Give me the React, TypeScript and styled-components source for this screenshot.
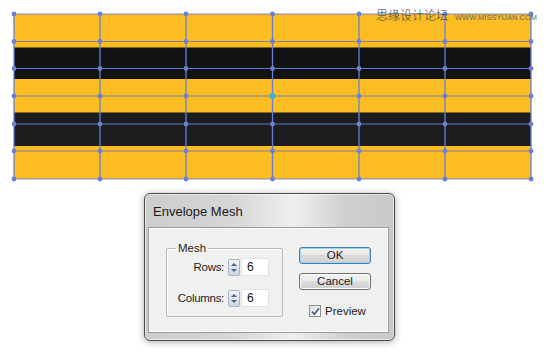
import React from "react";
import styled, { createGlobalStyle } from "styled-components";

const Global = createGlobalStyle`
  html, body { margin: 0; padding: 0; background: #ffffff; }
  body { width: 550px; height: 357px; overflow: hidden; font-family: "Liberation Sans", Arial, sans-serif; }
`;

const Page = styled.div`
  position: relative;
  width: 550px;
  height: 357px;
  background: #ffffff;
`;

const Artwork = styled.svg`
  display: block;
  width: 550px;
  height: 188px;
`;

const Watermark = styled.div`
  position: absolute;
  top: 6px;
  left: 376px;
  display: flex;
  align-items: baseline;
  gap: 7px;
  color: #4a4a4a;
  white-space: nowrap;
`;

const WatermarkCn = styled.span`
  font-family: "Noto Sans CJK SC", sans-serif;
  font-size: 12px;
  font-weight: 300;
  color: #3e3e3e;
`;

const WatermarkUrl = styled.span`
  font-family: "Liberation Sans", sans-serif;
  font-size: 7.4px;
  letter-spacing: 0.1px;
  color: #666666;
`;

const DialogRow = styled.div`
  display: flex;
  padding-left: 144px;
  margin-top: 5px;
`;

const Dialog = styled.div`
  box-sizing: border-box;
  width: 251px;
  height: 148px;
  border: 1px solid #4e4e4e;
  border-radius: 6px;
  background: linear-gradient(to right, #cdcdcd 0%, #d6d6d6 35%, #efefef 60%, #d0d0d0 80%, #c8c8c8 100%);
  box-shadow: 0 1px 7px rgba(0, 0, 0, 0.35), inset 0 0 0 1px rgba(255, 255, 255, 0.5);
  display: flex;
  flex-direction: column;
`;

const TitleBar = styled.div`
  height: 33px;
  flex: none;
  display: flex;
  align-items: center;
  padding: 2px 0 0 8px;
  box-sizing: border-box;
  font-family: "Liberation Sans", Arial, sans-serif;
  font-size: 13px;
  color: #1a1a1a;
`;

const Panel = styled.div`
  flex: 1;
  margin: 0 5px 7px 3px;
  border: 1px solid #9a9a9a;
  box-shadow: inset 0 0 0 1px #ffffff;
  background: #f0f0f0;
  display: flex;
  align-items: flex-start;
  padding: 14px 0 0 17px;
  gap: 16px;
  font-size: 11px;
  color: #1e1e1e;
`;

const Group = styled.fieldset`
  box-sizing: border-box;
  width: 117px;
  height: 75px;
  margin: 0;
  padding: 3px 13px 0 0;
  border: 1px solid #b9b9b9;
  border-radius: 2px;
  box-shadow: 1px 1px 0 #ffffff inset;
  display: flex;
  flex-direction: column;
  gap: 13px;
`;

const Legend = styled.legend`
  margin-left: 9px;
  padding: 0 2px;
  font-size: 11.5px;
  line-height: 13px;
  color: #1e1e1e;
`;

const FieldRow = styled.div`
  display: flex;
  align-items: center;
  height: 18px;
`;

const FieldLabel = styled.span`
  width: 57px;
  text-align: right;
  margin-right: 4px;
  font-size: 11.5px;
  letter-spacing: -0.3px;
`;

const Spinner = styled.div`
  box-sizing: border-box;
  width: 12px;
  height: 17px;
  border: 1px solid #a9b3c6;
  border-radius: 2px;
  background: linear-gradient(#eef2f8, #cdd6e6);
  display: flex;
  flex-direction: column;
  align-items: center;
  justify-content: space-evenly;
`;

const Arrow = styled.span<{ $down?: boolean }>`
  width: 0;
  height: 0;
  border-left: 3px solid transparent;
  border-right: 3px solid transparent;
  ${(p) => (p.$down ? "border-top: 3px solid #4d6185;" : "border-bottom: 3px solid #4d6185;")}
`;

const NumberBox = styled.div`
  box-sizing: border-box;
  width: 28px;
  height: 18px;
  margin-left: 1px;
  border: 1px solid #e2e2e2;
  background: #ffffff;
  display: flex;
  align-items: center;
  padding-left: 5px;
  font-size: 12px;
  color: #111;
`;

const Actions = styled.div`
  display: flex;
  flex-direction: column;
  margin-top: 5px;
  gap: 9px;
`;

const Button = styled.button<{ $focused?: boolean }>`
  box-sizing: border-box;
  width: 72px;
  height: 17px;
  padding: 0;
  border-radius: 3px;
  border: 1px solid ${(p) => (p.$focused ? "#3c7fb1" : "#707070")};
  background: ${(p) =>
    p.$focused
      ? "linear-gradient(#f4f1f1 0%, #ece6e6 49%, #dcd8d8 50%, #d2d2d2 100%)"
      : "linear-gradient(#f2f2f2 0%, #ebebeb 49%, #dddddd 50%, #cfcfcf 100%)"};
  box-shadow: inset 0 0 0 1px ${(p) => (p.$focused ? "#9fd3f0" : "#fcfcfc")};
  font-family: "Liberation Sans", Arial, sans-serif;
  font-size: 11.5px;
  color: #1a1a1a;
  line-height: 15px;
`;

const CheckRow = styled.label`
  display: flex;
  align-items: center;
  gap: 4px;
  margin: 6px 0 0 10px;
  font-size: 11.5px;
`;

const CheckBox = styled.span`
  box-sizing: border-box;
  width: 12px;
  height: 12px;
  border: 1px solid #8e8f8f;
  background: linear-gradient(135deg, #dcdcdc, #ffffff);
  display: flex;
  align-items: center;
  justify-content: center;
`;

const cols = [14, 100, 186, 272.5, 359, 445, 531];
const rows = [14, 41.5, 68.5, 96, 124, 151, 179];

function Mesh() {
  return (
    <Artwork viewBox="0 0 550 188">
      <rect x={14} y={14} width={517} height={165} fill="#fbbd22" />
      <rect x={14} y={47.5} width={517} height={31.5} fill="#121212" />
      <rect x={14} y={112.5} width={517} height={33.5} fill="#1d1d1d" />
      {rows.map((y, i) => (
        <line
          key={"h" + i}
          x1={14}
          x2={531}
          y1={y}
          y2={y}
          stroke={i === 2 || i === 4 ? "#5d78d8" : "rgba(86,100,214,0.72)"}
          strokeWidth={1.2}
        />
      ))}
      {cols.map((x, i) => (
        <line key={"v" + i} x1={x} x2={x} y1={14} y2={179} stroke="#6680d8" strokeWidth={1.3} />
      ))}
      {rows.map((y, r) =>
        cols.map((x, c) => {
          const center = r === 3 && c === 3;
          return (
            <circle
              key={`d${r}-${c}`}
              cx={x}
              cy={y}
              r={center ? 3 : 2.4}
              fill={center ? "#3fb3c9" : "#6a80d6"}
            />
          );
        })
      )}
    </Artwork>
  );
}

function NumberField({ label, value }: { label: string; value: string }) {
  return (
    <FieldRow>
      <FieldLabel>{label}</FieldLabel>
      <Spinner>
        <Arrow />
        <Arrow $down />
      </Spinner>
      <NumberBox>{value}</NumberBox>
    </FieldRow>
  );
}

export default function App() {
  return (
    <Page>
      <Global />
      <Mesh />
      <Watermark>
        <WatermarkCn>思缘设计论坛</WatermarkCn>
        <WatermarkUrl>WWW.MISSYUAN.COM</WatermarkUrl>
      </Watermark>
      <DialogRow>
        <Dialog>
          <TitleBar>Envelope Mesh</TitleBar>
          <Panel>
            <Group>
              <Legend>Mesh</Legend>
              <NumberField label="Rows:" value="6" />
              <NumberField label="Columns:" value="6" />
            </Group>
            <Actions>
              <Button $focused>OK</Button>
              <Button>Cancel</Button>
              <CheckRow>
                <CheckBox>
                  <svg width="9" height="9" viewBox="0 0 9 9">
                    <path d="M1 4.6 L3.4 7.2 L8 1.2" fill="none" stroke="#3d5590" strokeWidth="1.6" />
                  </svg>
                </CheckBox>
                Preview
              </CheckRow>
            </Actions>
          </Panel>
        </Dialog>
      </DialogRow>
    </Page>
  );
}
